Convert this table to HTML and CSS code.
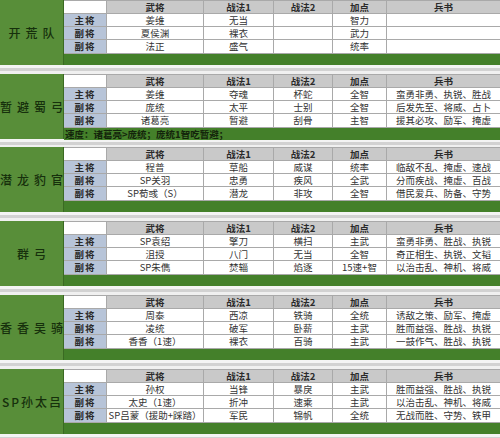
FILE: index.html
```html
<!DOCTYPE html>
<html lang="zh">
<head>
<meta charset="utf-8">
<link rel="stylesheet" href="styles.css">
</head>
<body>
<div class="page">

  <section class="team">
    <div class="label">开荒队</div>
    <div class="body">
      <div class="grid">
        <div class="c blank"></div><div class="c h">武将</div><div class="c h">战法1</div><div class="c h">战法2</div><div class="c h">加点</div><div class="c h">兵书</div>
        <div class="c role">主将</div><div class="c">姜维</div><div class="c">无当</div><div class="c"></div><div class="c">智力</div><div class="c"></div>
        <div class="c role">副将</div><div class="c">夏侯渊</div><div class="c">裸衣</div><div class="c"></div><div class="c">武力</div><div class="c"></div>
        <div class="c role">副将</div><div class="c">法正</div><div class="c">盛气</div><div class="c"></div><div class="c">统率</div><div class="c"></div>
      </div>
      <div class="bar"></div>
    </div>
  </section>
  <div class="gap"></div>

  <section class="team">
    <div class="label">暂避蜀弓</div>
    <div class="body">
      <div class="grid">
        <div class="c blank"></div><div class="c h">武将</div><div class="c h">战法1</div><div class="c h">战法2</div><div class="c h">加点</div><div class="c h">兵书</div>
        <div class="c role">主将</div><div class="c">姜维</div><div class="c">夺魂</div><div class="c">杯蛇</div><div class="c">全智</div><div class="c">蛮勇非勇、执锐、胜战</div>
        <div class="c role">副将</div><div class="c">庞统</div><div class="c">太平</div><div class="c">士别</div><div class="c">全智</div><div class="c">后发先至、将威、占卜</div>
        <div class="c role">副将</div><div class="c">诸葛亮</div><div class="c">暂避</div><div class="c">刮骨</div><div class="c">主智</div><div class="c">援其必攻、励军、掩虚</div>
      </div>
      <div class="bar note">速度：诸葛亮&gt;庞统；庞统1智吃暂避；</div>
    </div>
  </section>
  <div class="gap short"></div>

  <section class="team">
    <div class="label">潜龙豹官</div>
    <div class="body">
      <div class="grid">
        <div class="c blank"></div><div class="c h">武将</div><div class="c h">战法1</div><div class="c h">战法2</div><div class="c h">加点</div><div class="c h">兵书</div>
        <div class="c role">主将</div><div class="c">程普</div><div class="c">草船</div><div class="c">威谋</div><div class="c">统率</div><div class="c">临敌不乱、掩虚、速战</div>
        <div class="c role">副将</div><div class="c">SP关羽</div><div class="c">忠勇</div><div class="c">疾风</div><div class="c">全武</div><div class="c">分而疾战、掩虚、百战</div>
        <div class="c role">副将</div><div class="c">SP荀彧（S）</div><div class="c">潜龙</div><div class="c">非攻</div><div class="c">全智</div><div class="c">借民爱兵、防备、守势</div>
      </div>
      <div class="bar"></div>
    </div>
  </section>
  <div class="gap"></div>

  <section class="team">
    <div class="label">群弓</div>
    <div class="body">
      <div class="grid">
        <div class="c blank"></div><div class="c h">武将</div><div class="c h">战法1</div><div class="c h">战法2</div><div class="c h">加点</div><div class="c h">兵书</div>
        <div class="c role">主将</div><div class="c">SP袁绍</div><div class="c">擎刀</div><div class="c">横扫</div><div class="c">主武</div><div class="c">蛮勇非勇、胜战、执锐</div>
        <div class="c role">副将</div><div class="c">沮授</div><div class="c">八门</div><div class="c">无当</div><div class="c">全智</div><div class="c">奇正相生、执锐、文韬</div>
        <div class="c role">副将</div><div class="c">SP朱儁</div><div class="c">焚辎</div><div class="c">焰逐</div><div class="c">15速+智</div><div class="c">以治击乱、神机、将威</div>
      </div>
      <div class="bar"></div>
    </div>
  </section>
  <div class="gap"></div>

  <section class="team">
    <div class="label">香香吴骑</div>
    <div class="body">
      <div class="grid">
        <div class="c blank"></div><div class="c h">武将</div><div class="c h">战法1</div><div class="c h">战法2</div><div class="c h">加点</div><div class="c h">兵书</div>
        <div class="c role">主将</div><div class="c">周泰</div><div class="c">西凉</div><div class="c">铁骑</div><div class="c">全统</div><div class="c">诱敌之策、励军、掩虚</div>
        <div class="c role">副将</div><div class="c">凌统</div><div class="c">破军</div><div class="c">卧薪</div><div class="c">主武</div><div class="c">胜而益强、胜战、执锐</div>
        <div class="c role">副将</div><div class="c">香香（1速）</div><div class="c">裸衣</div><div class="c">百骑</div><div class="c">主武</div><div class="c">一鼓作气、胜战、执锐</div>
      </div>
      <div class="bar"></div>
    </div>
  </section>
  <div class="gap"></div>

  <section class="team">
    <div class="label sp">SP孙太吕</div>
    <div class="body">
      <div class="grid">
        <div class="c blank"></div><div class="c h">武将</div><div class="c h">战法1</div><div class="c h">战法2</div><div class="c h">加点</div><div class="c h">兵书</div>
        <div class="c role">主将</div><div class="c">孙权</div><div class="c">当锋</div><div class="c">暴戾</div><div class="c">主武</div><div class="c">胜而益强、胜战、执锐</div>
        <div class="c role">副将</div><div class="c">太史（1速）</div><div class="c">折冲</div><div class="c">速乘</div><div class="c">主武</div><div class="c">以治击乱、神机、将威</div>
        <div class="c role">副将</div><div class="c">SP吕蒙（援助+踩踏）</div><div class="c">军民</div><div class="c">锦帆</div><div class="c">全统</div><div class="c">无战而胜、守势、铁甲</div>
      </div>
      <div class="bar"></div>
    </div>
  </section>
  <div class="gap end"></div>

</div>
</body>
</html>
```

FILE: styles.css
```css
html, body {
  margin: 0;
  padding: 0;
  background: #ededed;
}
.page {
  width: 500px;
  height: 438px;
  overflow: hidden;
  font-family: "Noto Sans CJK SC", "Noto Sans", sans-serif;
  color: #333;
}
.team {
  display: flex;
  height: 65px;
}
.label {
  width: 63px;
  flex: none;
  background: #588e39;
  color: #16300c;
  font-size: 12px;
  font-weight: 500;
  letter-spacing: 5px;
  padding-left: 5px;
  box-sizing: border-box;
  display: flex;
  align-items: center;
  justify-content: center;
  white-space: nowrap;
}
.label.sp {
  letter-spacing: 2px;
  padding-left: 2px;
}
.body {
  flex: 1;
  display: flex;
  flex-direction: column;
  border-left: 1px solid #3a6a22;
}
.grid {
  display: grid;
  grid-template-columns: 42px 96px 69px 58px 53px 1fr;
  grid-template-rows: 12px 12px 12px 13px;
  gap: 1px;
  padding: 1px 0 1px 0;
  background: #a9a9a9;
}
.c {
  background: #fff;
  font-size: 9.5px;
  line-height: 12px;
  text-align: center;
  white-space: nowrap;
  overflow: hidden;
}
.c.blank {
  background: #fff;
}
.c.h {
  background: #c9c9c9;
  font-weight: 700;
  color: #2a2a2a;
}
.c.role {
  background: #b7c4d8;
  font-weight: 700;
  color: #2a2a2a;
  letter-spacing: 1px;
}
.bar {
  flex: 1;
  background: #44802a;
}
.bar.note {
  font-size: 9.5px;
  font-weight: 700;
  line-height: 12px;
  color: #13240b;
  padding-left: 1px;
  white-space: nowrap;
}
.gap {
  height: 9px;
  background: linear-gradient(#f4f4f4 0, #f4f4f4 3px, #d2d2d2 3px, #d2d2d2 6px, #f0f0f0 6px);
}
.gap.short {
  height: 8px;
}
```
